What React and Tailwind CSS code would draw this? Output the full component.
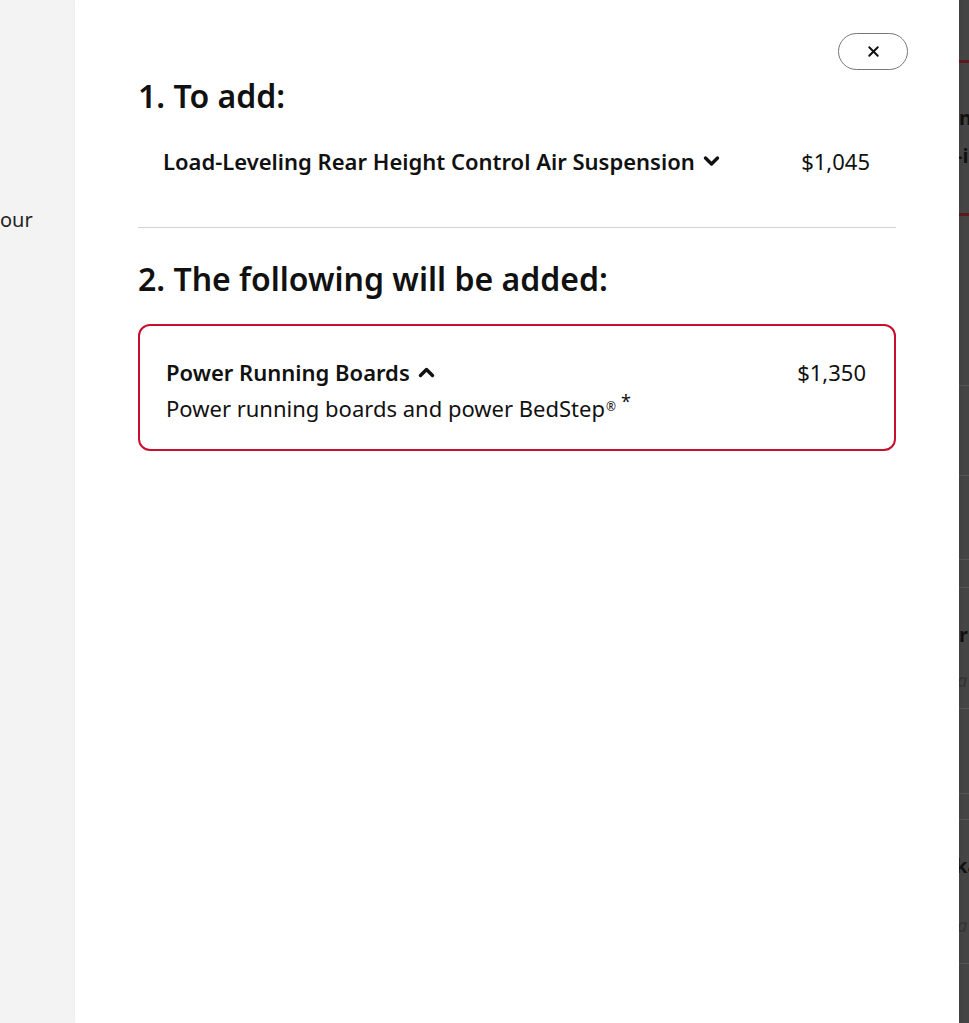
import { X } from "lucide-react";

function Chevron({ up = false }) {
  return (
    <svg width="17" height="12" viewBox="0 0 17 12" className="ml-2 inline-block" aria-hidden="true">
      <path
        d={up ? "M2.5 9.5 L8.5 3.5 L14.5 9.5" : "M2.5 3 L8.5 9 L14.5 3"}
        fill="none"
        stroke="#111"
        strokeWidth="3.4"
        strokeLinecap="round"
        strokeLinejoin="round"
      />
    </svg>
  );
}

function BackdropStrip() {
  // dimmed page peeking out behind the modal
  return (
    <div className="flex h-full flex-1 flex-col overflow-hidden bg-[#454545] text-[20px] font-bold text-[#111]">
      <div className="h-[60px]" />
      <div className="h-[3px] bg-[#5c1a1f]" />
      <div className="h-[42px]" />
      <div className="h-[26px] leading-[26px]">n</div>
      <div className="h-[12px]" />
      <div className="-ml-[3px] h-[26px] leading-[26px]">-i</div>
      <div className="h-[44px]" />
      <div className="h-[3px] bg-[#5c1a1f]" />
      <div className="h-[169px]" />
      <div className="h-px bg-[#555]" />
      <div className="h-[89px]" />
      <div className="h-px bg-[#555]" />
      <div className="h-[83px]" />
      <div className="h-px bg-[#555]" />
      <div className="h-[27px]" />
      <div className="h-px bg-[#555]" />
      <div className="h-[34px]" />
      <div className="h-[26px] leading-[26px]">r</div>
      <div className="h-[20px]" />
      <div className="-ml-[2px] h-[24px] text-[18px] font-normal italic leading-[24px] text-[#333]">a</div>
      <div className="h-[16px]" />
      <div className="h-px bg-[#555]" />
      <div className="h-[84px]" />
      <div className="h-px bg-[#555]" />
      <div className="h-[25px]" />
      <div className="h-px bg-[#555]" />
      <div className="h-[33px]" />
      <div className="-ml-[4px] h-[26px] leading-[26px]">ka</div>
      <div className="h-[34px]" />
      <div className="-ml-[2px] h-[24px] text-[18px] font-normal italic leading-[24px] text-[#333]">a</div>
      <div className="h-[26px]" />
      <div className="h-px bg-[#555]" />
    </div>
  );
}

export default function App() {
  return (
    <div
      className="flex h-[1023px] w-[969px] overflow-hidden bg-white text-[#111]"
      style={{ fontFamily: "'Noto Sans', 'Open Sans', sans-serif" }}
    >
      <div className="h-full w-[75px] shrink-0 overflow-hidden bg-[#f3f3f3]">
        <div className="mt-[207px] text-[20px] leading-[26px] text-[#222]">our</div>
      </div>

      <div className="relative h-full w-[884px] shrink-0 bg-white px-[63px] pt-[76px] shadow-[1px_0_4px_rgba(0,0,0,0.08)]">
        <button
          type="button"
          aria-label="Close"
          className="absolute right-[51px] top-[33px] flex h-[37px] w-[70px] items-center justify-center rounded-full border border-[#777] bg-white"
        >
          <X size={17} strokeWidth={2.75} />
        </button>

        <h2 className="text-[32px] font-semibold leading-[40px]">1. To add:</h2>

        <div className="mt-[30px] flex items-center justify-between pl-[25px] pr-[26px]">
          <div className="flex items-center text-[22px] font-semibold leading-[30px]">
            Load-Leveling Rear Height Control Air Suspension
            <Chevron />
          </div>
          <div className="text-[22px] leading-[30px]">$1,045</div>
        </div>

        <div className="mt-[51px] h-px bg-[#d3d3d3]" />

        <h2 className="mt-[31px] text-[32px] font-semibold leading-[40px]">2. The following will be added:</h2>

        <div className="mt-[25px] rounded-[12px] border-2 border-[#c8102e] px-[26px] pb-[26px] pt-[31px]">
          <div className="flex items-center justify-between">
            <div className="flex items-center text-[22px] font-semibold leading-[30px]">
              Power Running Boards
              <Chevron up />
            </div>
            <div className="pr-[2px] text-[22px] leading-[30px]">$1,350</div>
          </div>
          <div className="mt-[6px] text-[22px] leading-[30px]">
            Power running boards and power BedStep
            <sup className="ml-[1px] text-[12px]">®</sup>
            <sup className="ml-[5px] text-[18px]">*</sup>
          </div>
        </div>
      </div>

      <BackdropStrip />
    </div>
  );
}
